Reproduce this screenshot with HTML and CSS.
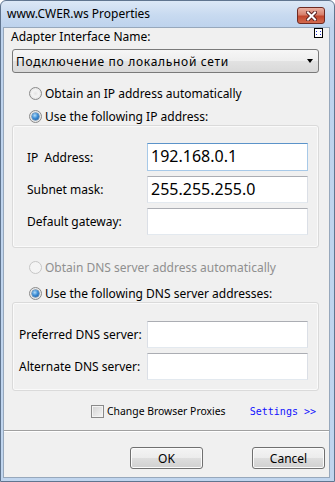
FILE: index.html
```html
<!DOCTYPE html>
<html>
<head>
<meta charset="utf-8">
<link rel="stylesheet" href="styles.css">
</head>
<body>
<div class="window">
  <div class="titlebar">
    <span class="title">www.CWER.ws Properties</span>
    <div class="close">
      <svg width="11" height="10" viewBox="0 0 11 10">
        <path d="M2 1.5 L9 8.5 M9 1.5 L2 8.5" stroke="#5a2020" stroke-width="4" stroke-linecap="square" fill="none"/>
        <path d="M2 1.5 L9 8.5 M9 1.5 L2 8.5" stroke="#ffffff" stroke-width="2" stroke-linecap="square" fill="none"/>
      </svg>
    </div>
  </div>
  <div class="client">
    <div class="panel">
      <div class="adapter-row">
        <span>Adapter Interface Name:</span>
        <svg class="mini-icon" width="9" height="10" viewBox="0 0 9 10">
          <rect x="0.5" y="0.5" width="8" height="9" fill="#fff" stroke="#000"/>
          <rect x="2" y="3" width="1" height="1" fill="#2030d0"/>
          <rect x="6" y="3" width="1" height="1" fill="#2030d0"/>
          <rect x="2" y="6" width="1" height="1" fill="#2030d0"/>
          <rect x="6" y="6" width="1" height="1" fill="#2030d0"/>
        </svg>
      </div>
      <div class="combo"><span class="combo-text">Подключение по локальной сети</span><span class="arrow"></span></div>
      <div class="radio-row r-first"><span class="radio"></span><span>Obtain an IP address automatically</span></div>
      <div class="radio-row r-second"><span class="radio checked"></span><span>Use the following IP address:</span></div>
      <div class="group group-ip">
        <div class="field tall"><span class="flabel">IP&nbsp; Address:</span><div class="input focused">192.168.0.1</div></div>
        <div class="field"><span class="flabel">Subnet mask:</span><div class="input">255.255.255.0</div></div>
        <div class="field"><span class="flabel">Default gateway:</span><div class="input"></div></div>
      </div>
      <div class="radio-row r-third disabled"><span class="radio"></span><span>Obtain DNS server address automatically</span></div>
      <div class="radio-row r-fourth"><span class="radio checked"></span><span>Use the following DNS server addresses:</span></div>
      <div class="group group-dns">
        <div class="field"><span class="flabel">Preferred DNS server:</span><div class="input"></div></div>
        <div class="field"><span class="flabel">Alternate DNS server:</span><div class="input"></div></div>
      </div>
      <div class="proxy-row">
        <span class="check"><span class="checkbox"></span><span class="check-text">Change Browser Proxies</span></span>
        <span class="link">Settings &gt;&gt;</span>
      </div>
    </div>
    <div class="buttons">
      <div class="btn">OK</div>
      <div class="btn">Cancel</div>
    </div>
  </div>
</div>
</body>
</html>
```
FILE: styles.css
```css
* { box-sizing: border-box; }
html, body { margin: 0; padding: 0; }
body {
  width: 335px;
  height: 482px;
  overflow: hidden;
  font-family: "Noto Sans", "Open Sans", sans-serif;
  font-size: 12px;
  color: #000;
  background: #ffffff;
}
.window {
  width: 335px;
  height: 482px;
  border: 1px solid #60758f;
  border-radius: 6px 6px 0 0;
  background: linear-gradient(#dce8f6 0px, #c8daf0 14px, #bed3ed 26px, #c0d5ee 100%);
  display: flex;
  flex-direction: column;
}
.titlebar {
  height: 26px;
  flex: none;
  display: flex;
  align-items: center;
  padding-left: 6px;
}
.title { line-height: 14px; }
.close {
  margin-left: auto;
  margin-right: 9px;
  align-self: flex-start;
  margin-top: 6px;
  width: 28px;
  height: 17px;
  border: 1px solid #6e2a22;
  border-radius: 3px;
  background: linear-gradient(#eab0a2 0%, #d7806c 45%, #c2452c 55%, #d26a4e 100%);
  display: flex;
  align-items: center;
  justify-content: center;
}
.client {
  flex: 1;
  margin: 0 4px 3px 2px;
  background: #f0f0f0;
  border: 1px solid #97a8bc;
  display: flex;
  flex-direction: column;
}
.panel {
  padding: 2px 0 12px;
  border-bottom: 1px solid #a0a0a0;
  box-shadow: 0 1px 0 #ffffff;
}
.adapter-row {
  height: 14px;
  line-height: 14px;
  display: flex;
  align-items: flex-start;
  padding-left: 7px;
  padding-right: 6px;
}
.mini-icon { margin-left: auto; margin-top: -2px; }
.combo {
  margin: 5px 0 0 8px;
  width: 307px;
  height: 24px;
  border: 1px solid #7a7a7a;
  border-radius: 3px;
  background: linear-gradient(#f6f6f6 0%, #eeeeee 50%, #e2e2e2 51%, #d9d9d9 100%);
  display: flex;
  align-items: center;
  padding: 0 5px 0 3px;
}
.combo-text { letter-spacing: 0.7px; }
.arrow {
  margin-left: auto;
  width: 0;
  height: 0;
  border-left: 3.5px solid transparent;
  border-right: 3.5px solid transparent;
  border-top: 4px solid #000;
}
.radio-row {
  height: 16px;
  display: flex;
  align-items: center;
  gap: 3px;
  padding-left: 25px;
}
.r-first { margin-top: 12px; }
.r-second { margin-top: 7px; }
.r-third { margin-top: 11px; }
.r-fourth { margin-top: 10px; }
.radio {
  width: 13px;
  height: 13px;
  border-radius: 50%;
  border: 1px solid #8a8a8a;
  background: radial-gradient(circle at 50% 50%, #e4e4e4 0%, #f4f4f4 40%, #d8d8d8 100%);
  position: relative;
  flex: none;
}
.radio.checked::after {
  content: "";
  position: absolute;
  left: 2px;
  top: 2px;
  width: 7px;
  height: 7px;
  border-radius: 50%;
  background: radial-gradient(circle at 40% 35%, #b4dcf8 0%, #3f8fd6 45%, #0f4d96 100%);
  box-shadow: 0 0 0 0.5px #2d5f8f;
}
.disabled { color: #8f8f8f; }
.disabled .radio {
  border-color: #c6c6c6;
  background: #f4f4f4;
}
.group {
  margin: 1px 0 0 8px;
  width: 307px;
  border: 1px solid #dadada;
  border-radius: 3px;
  box-shadow: inset 0 0 0 1px #fafafa;
  display: flex;
  flex-direction: column;
  gap: 5px;
  padding-right: 10px;
}
.group-ip { padding-top: 17px; padding-bottom: 12px; padding-left: 14px; }
.group-dns { padding-top: 18px; padding-bottom: 10px; padding-left: 6px; }
.field {
  height: 27px;
  display: flex;
  align-items: center;
}
.field.tall { height: 28px; }
.flabel { flex: 1; white-space: nowrap; }
.input {
  width: 161px;
  height: 100%;
  background: #ffffff;
  border: 1px solid #dbdfe6;
  border-top-color: #abadb3;
  border-bottom-color: #e3e9ef;
  font-size: 16px;
  line-height: 24px;
  padding-left: 3px;
}
.input.focused {
  border-color: #a7c9e8;
  border-top-color: #5b93c9;
}
.proxy-row {
  margin-top: 13px;
  height: 14px;
  display: flex;
  align-items: center;
  padding-left: 87px;
  padding-right: 13px;
}
.check {
  display: flex;
  align-items: center;
  gap: 3px;
}
.check-text { font-size: 10.4px; }
.checkbox {
  width: 13px;
  height: 13px;
  border: 1px solid #8a8a8a;
  background: linear-gradient(135deg, #d2d2d2, #f6f6f6);
  box-shadow: inset 0 0 0 1px #f4f4f4;
  flex: none;
}
.link {
  margin-left: auto;
  font-family: "DejaVu Sans Mono", "Liberation Mono", monospace;
  font-size: 10px;
  color: #1010ff;
}
.buttons {
  padding-top: 16px;
  padding-right: 4px;
  display: flex;
  justify-content: flex-end;
  gap: 49px;
}
.btn {
  width: 73px;
  height: 22px;
  border: 1px solid #707070;
  border-radius: 3px;
  background: linear-gradient(#f4f4f4 0%, #ececec 50%, #dedede 51%, #d0d0d0 100%);
  box-shadow: inset 0 0 0 1px #fbfbfb;
  display: flex;
  align-items: center;
  justify-content: center;
}
```
